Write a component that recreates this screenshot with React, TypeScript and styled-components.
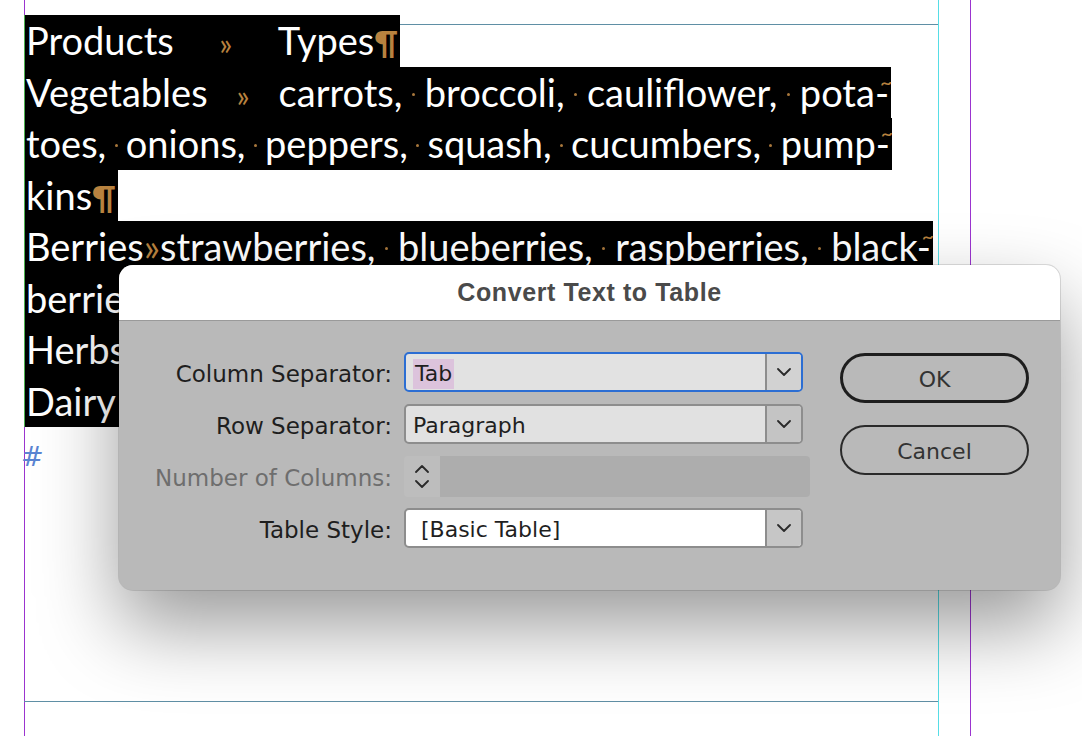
import React from 'react';
import styled, { createGlobalStyle } from 'styled-components';

const GlobalStyle = createGlobalStyle`
  html, body {
    margin: 0;
    padding: 0;
    background: #ffffff;
  }
  body {
    overflow: hidden;
  }
`;

const Page = styled.div`
  position: relative;
  width: 1082px;
  height: 736px;
  overflow: hidden;
  background: #ffffff;
  padding: 15px 0 0 24px;
  box-sizing: border-box;
`;

const VGuide = styled.div<{ $x: number; $color: string }>`
  position: absolute;
  top: 0;
  bottom: 0;
  left: ${({ $x }) => $x}px;
  width: 1px;
  background: ${({ $color }) => $color};
`;

const HGuide = styled.div<{ $y: number }>`
  position: absolute;
  left: 24px;
  width: 914px;
  top: ${({ $y }) => $y}px;
  height: 1px;
  background: #5f8fa5;
`;

const Story = styled.div`
  position: relative;
  font-family: Lato, 'Open Sans', sans-serif;
  font-size: 38px;
  color: #ffffff;
`;

const Frame = styled.div`
  display: flex;
  flex-direction: column;
  align-items: flex-start;
  border-left: 1px solid #4caf50;
`;

const Line = styled.div<{ $w?: number }>`
  display: flex;
  align-items: baseline;
  height: 51.5px;
  line-height: 51.5px;
  white-space: nowrap;
  background: #000000;
  padding: 0 2px 0 1px;
  width: ${({ $w }) => ($w ? `${$w}px` : 'auto')};
  box-sizing: border-box;
`;

const Justified = styled.span`
  flex: 1;
  display: flex;
  align-items: baseline;
  justify-content: space-between;
`;

const Plain = styled.span`
  display: flex;
  align-items: baseline;
  gap: 5px;
`;

const Mark = styled.span`
  color: #b8823f;
`;

const Tab = styled.span<{ $w: number }>`
  display: inline-flex;
  justify-content: center;
  width: ${({ $w }) => $w}px;
  color: #b8823f;
  font-size: 0.8em;
`;

const Pilcrow = styled.span`
  color: #b8823f;
  font-weight: 700;
  font-size: 0.85em;
`;

const Dot = styled.span`
  display: inline-block;
  width: 3px;
  height: 3px;
  border-radius: 50%;
  background: #a8773c;
  transform: translateY(-11px);
`;

const Hyph = styled.span`
  position: relative;
  &::after {
    content: '~';
    position: absolute;
    right: -3px;
    top: 3px;
    font-size: 0.55em;
    line-height: 1;
    color: #b8823f;
  }
`;

const EndMark = styled.div`
  font-family: 'DejaVu Sans', sans-serif;
  font-style: italic;
  font-size: 27px;
  line-height: 28px;
  color: #5a84d2;
  margin: 16px 0 0 -3px;
`;

const Dialog = styled.div`
  position: absolute;
  left: 119px;
  top: 265px;
  width: 941px;
  height: 325px;
  border-radius: 14px;
  overflow: hidden;
  background: #b9b9b9;
  box-shadow: 0 36px 80px rgba(0, 0, 0, 0.4), 0 0 0 1px rgba(0, 0, 0, 0.12);
  display: flex;
  flex-direction: column;
  font-family: 'DejaVu Sans', sans-serif;
`;

const TitleBar = styled.div`
  height: 56px;
  flex: none;
  box-sizing: border-box;
  background: #ffffff;
  border-bottom: 1px solid #9a9a9a;
  display: flex;
  align-items: center;
  justify-content: center;
  font-family: 'Liberation Sans', Arial, sans-serif;
  font-weight: 700;
  font-size: 25px;
  letter-spacing: 0.6px;
  color: #4a4a4a;
`;

const Body = styled.div`
  display: flex;
  padding: 31px 31px 0 0;
`;

const Form = styled.div`
  display: grid;
  grid-template-columns: 273px 399px;
  grid-auto-rows: 40px;
  column-gap: 12px;
  row-gap: 12px;
`;

const Label = styled.div<{ $disabled?: boolean }>`
  align-self: center;
  text-align: right;
  font-size: 23px;
  line-height: 28px;
  padding-top: 4px;
  color: ${({ $disabled }) => ($disabled ? '#6e6e6e' : '#1e1e1e')};
  white-space: nowrap;
`;

const Select = styled.div<{ $focus?: boolean; $bg: string }>`
  display: flex;
  box-sizing: border-box;
  height: 40px;
  border: 2px solid ${({ $focus }) => ($focus ? '#2c6ed3' : '#8d8d8d')};
  border-radius: 5px;
  background: ${({ $bg }) => $bg};
  overflow: hidden;
`;

const Value = styled.div<{ $pad: number }>`
  flex: 1;
  display: flex;
  align-items: center;
  padding: 3px 0 0 ${({ $pad }) => $pad}px;
  font-size: 22px;
  color: #1f1f1f;
`;

const Highlight = styled.span`
  background: #dcc3dc;
  padding: 0 2px;
  line-height: 30px;
`;

const Caret = styled.div<{ $bg: string }>`
  width: 34px;
  flex: none;
  border-left: 2px solid #8d8d8d;
  background: ${({ $bg }) => $bg};
  display: flex;
  align-items: center;
  justify-content: center;
`;

const NumberField = styled.div`
  display: flex;
  width: 406px;
  height: 41px;
  border-radius: 4px;
  overflow: hidden;
`;

const Stepper = styled.div`
  width: 36px;
  flex: none;
  background: #bdbdbd;
  display: flex;
  flex-direction: column;
  align-items: center;
  justify-content: center;
  gap: 7px;
`;

const DisabledInput = styled.div`
  flex: 1;
  background: #adadad;
`;

const Buttons = styled.div`
  margin-left: auto;
  width: 189px;
  display: flex;
  flex-direction: column;
  gap: 22px;
  padding-top: 1px;
`;

const Button = styled.div<{ $primary?: boolean }>`
  height: 50px;
  box-sizing: border-box;
  border: ${({ $primary }) => ($primary ? '3px solid #1e1e1e' : '2px solid #2a2a2a')};
  border-radius: 25px;
  display: flex;
  align-items: center;
  justify-content: center;
  padding-top: 2px;
  font-size: 22px;
  color: #333333;
`;

const Chevron = ({ up = false }: { up?: boolean }) => (
  <svg width="14" height="8" viewBox="0 0 14 8" aria-hidden="true">
    <polyline
      points={up ? '1,7 7,1 13,7' : '1,1 7,7 13,1'}
      fill="none"
      stroke="#2a2a2a"
      strokeWidth="1.8"
      strokeLinecap="round"
      strokeLinejoin="round"
    />
  </svg>
);

const words = (list: string[]) =>
  list.map((w, i) => (
    <React.Fragment key={i}>
      {i > 0 && <Dot />}
      <span>{w}</span>
    </React.Fragment>
  ));

export default function App() {
  return (
    <>
      <GlobalStyle />
      <Page>
        <VGuide $x={24} $color="#9b34cf" />
        <VGuide $x={970} $color="#9b34cf" />
        <VGuide $x={938} $color="#56dde6" />
        <HGuide $y={24} />
        <HGuide $y={701} />

        <Story>
          <Frame>
            <Line>
              <span>Products</span>
              <Tab $w={104}>»</Tab>
              <span>Types</span>
              <Pilcrow>¶</Pilcrow>
            </Line>
            <Line $w={866}>
              <span>Vegetables</span>
              <Tab $w={71}>»</Tab>
              <Justified>
                {words(['carrots,', 'broccoli,', 'cauliflower,'])}
                <Dot />
                <span>
                  pota<Hyph>-</Hyph>
                </span>
              </Justified>
            </Line>
            <Line $w={867}>
              <Justified>
                {words(['toes,', 'onions,', 'peppers,', 'squash,', 'cucumbers,'])}
                <Dot />
                <span>
                  pump<Hyph>-</Hyph>
                </span>
              </Justified>
            </Line>
            <Line>
              <span>kins</span>
              <Pilcrow>¶</Pilcrow>
            </Line>
            <Line $w={908}>
              <Justified>
                <span>
                  Berries<Mark>»</Mark>strawberries,
                </span>
                <Dot />
                {words(['blueberries,', 'raspberries,'])}
                <Dot />
                <span>
                  black<Hyph>-</Hyph>
                </span>
              </Justified>
            </Line>
            <Line>
              <Plain>{words(['berries,', 'cranberries,', 'gooseberries'])}</Plain>
              <Pilcrow>¶</Pilcrow>
            </Line>
            <Line>
              <span>Herbs</span>
              <Tab $w={80}>»</Tab>
              <Plain>{words(['basil,', 'parsley,', 'cilantro,', 'mint'])}</Plain>
              <Pilcrow>¶</Pilcrow>
            </Line>
            <Line>
              <span>Dairy</span>
              <Tab $w={80}>»</Tab>
              <Plain>{words(['milk,', 'cheese,', 'butter,', 'yogurt'])}</Plain>
              <Pilcrow>¶</Pilcrow>
            </Line>
          </Frame>
          <EndMark>#</EndMark>
        </Story>

        <Dialog>
          <TitleBar>Convert Text to Table</TitleBar>
          <Body>
            <Form>
              <Label>Column Separator:</Label>
              <Select $focus $bg="#e2e2e2">
                <Value $pad={7}>
                  <Highlight>Tab</Highlight>
                </Value>
                <Caret $bg="#d2d2d2">
                  <Chevron />
                </Caret>
              </Select>

              <Label>Row Separator:</Label>
              <Select $bg="#e1e1e1">
                <Value $pad={7}>Paragraph</Value>
                <Caret $bg="#c4c4c4">
                  <Chevron />
                </Caret>
              </Select>

              <Label $disabled>Number of Columns:</Label>
              <NumberField>
                <Stepper>
                  <Chevron up />
                  <Chevron />
                </Stepper>
                <DisabledInput />
              </NumberField>

              <Label>Table Style:</Label>
              <Select $bg="#ffffff">
                <Value $pad={15}>[Basic Table]</Value>
                <Caret $bg="#c6c6c6">
                  <Chevron />
                </Caret>
              </Select>
            </Form>
            <Buttons>
              <Button $primary>OK</Button>
              <Button>Cancel</Button>
            </Buttons>
          </Body>
        </Dialog>
      </Page>
    </>
  );
}
